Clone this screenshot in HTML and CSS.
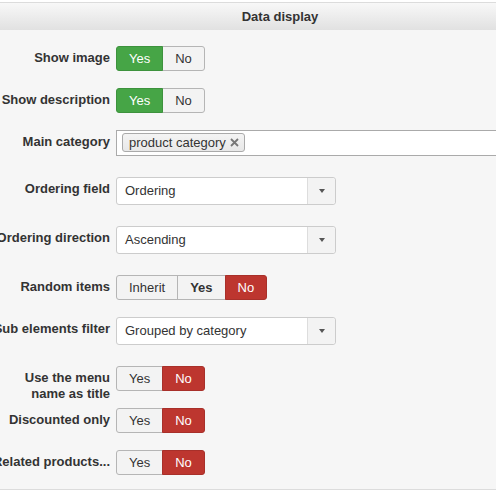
FILE: index.html
```html
<!DOCTYPE html>
<html lang="en">

<head>
    <meta charset="UTF-8">
    <meta name="viewport" content="width=device-width, initial-scale=1.0">
    <title>Module Options</title>
    <link rel="stylesheet" href="styles.css">
</head>

<body>

    <div class="panel">
        <div class="panel-head">Data display</div>

        <div class="panel-body">
            <div class="field">
                <div class="field-label">Show image</div>
                <div class="btn-group">
                    <span class="btn btn-yes">Yes</span>
                    <span class="btn">No</span>
                </div>
            </div>

            <div class="field">
                <div class="field-label">Show description</div>
                <div class="btn-group">
                    <span class="btn btn-yes">Yes</span>
                    <span class="btn">No</span>
                </div>
            </div>

            <div class="field field-tall">
                <div class="field-label">Main category</div>
                <div class="tags">
                    <span class="tag">product category
                        <svg class="tag-close" width="9" height="9" viewBox="0 0 9 9">
                            <path d="M1 1 L8 8 M8 1 L1 8" stroke="#777" stroke-width="1.8" fill="none" />
                        </svg>
                    </span>
                </div>
            </div>

            <div class="field field-tall">
                <div class="field-label">Ordering field</div>
                <div class="select">
                    <span class="select-value">Ordering</span>
                    <span class="select-arrow"><b></b></span>
                </div>
            </div>

            <div class="field field-tall">
                <div class="field-label">Ordering direction</div>
                <div class="select">
                    <span class="select-value">Ascending</span>
                    <span class="select-arrow"><b></b></span>
                </div>
            </div>

            <div class="field">
                <div class="field-label">Random items</div>
                <div class="btn-group">
                    <span class="btn">Inherit</span>
                    <span class="btn btn-bold">Yes</span>
                    <span class="btn btn-no">No</span>
                </div>
            </div>

            <div class="field field-tall">
                <div class="field-label">Sub elements filter</div>
                <div class="select">
                    <span class="select-value">Grouped by category</span>
                    <span class="select-arrow"><b></b></span>
                </div>
            </div>

            <div class="field">
                <div class="field-label">Use the menu name as title</div>
                <div class="btn-group">
                    <span class="btn">Yes</span>
                    <span class="btn btn-no">No</span>
                </div>
            </div>

            <div class="field">
                <div class="field-label">Discounted only</div>
                <div class="btn-group">
                    <span class="btn">Yes</span>
                    <span class="btn btn-no">No</span>
                </div>
            </div>

            <div class="field">
                <div class="field-label">Related products...</div>
                <div class="btn-group">
                    <span class="btn">Yes</span>
                    <span class="btn btn-no">No</span>
                </div>
            </div>
        </div>
    </div>

</body>

</html>
```

FILE: styles.css
```css
html {
    overflow: hidden;
}

body {
    font-family: 'Liberation Sans', Arial, Helvetica, sans-serif;
    font-size: 13px;
    color: #333;
    margin: 0;
    padding: 0;
    background-color: #fff;
}

.panel {
    width: 576px;
    margin: 2px 0 0 -8px;
    border-top: 1px solid #dcdcdc;
    border-bottom: 1px solid #dcdcdc;
    background-color: #f6f6f6;
}

.panel-head {
    height: 27px;
    line-height: 27px;
    text-align: center;
    font-weight: bold;
    background: linear-gradient(#f8f8f8, #e1e1e1);
}

.panel-body {
    padding: 16px 0 14px;
}

.field {
    display: flex;
    align-items: flex-start;
    gap: 6px;
    margin-bottom: 17px;
}

.field-tall {
    margin-bottom: 21px;
}

.field:last-child {
    margin-bottom: 0;
}

/* fixed height so a two-line label doesn't push the row down */
.field-label {
    flex: none;
    width: 118px;
    height: 21px;
    padding-top: 4px;
    line-height: 16px;
    text-align: right;
    font-weight: bold;
}

.btn-group {
    display: flex;
}

.btn {
    display: block;
    height: 25px;
    box-sizing: border-box;
    padding: 3px 12px;
    line-height: 17px;
    border: 1px solid #b5b5b5;
    background-color: #f3f3f3;
    color: #333;
}

.btn + .btn {
    margin-left: -1px;
}

.btn:first-child {
    border-radius: 3px 0 0 3px;
}

.btn:last-child {
    border-radius: 0 3px 3px 0;
}

.btn-bold {
    font-weight: bold;
}

.btn-yes {
    background-color: #46a546;
    border-color: #3d923d;
    color: #fff;
    position: relative;
}

.btn-no {
    background-color: #bd362f;
    border-color: #a8302a;
    color: #fff;
    position: relative;
}

.tags {
    width: 420px;
    height: 26px;
    box-sizing: border-box;
    border: 1px solid #aaa;
    background-color: #fff;
    padding: 2px 5px;
}

.tag {
    display: inline-flex;
    align-items: center;
    gap: 4px;
    height: 19px;
    box-sizing: border-box;
    padding: 2px 5px 2px 6px;
    line-height: 13px;
    border: 1px solid #aaa;
    border-radius: 3px;
    background: linear-gradient(#f4f4f4, #e8e8e8);
    color: #333;
}

.tag-close {
    display: block;
}

.select {
    display: flex;
    width: 220px;
    height: 28px;
    box-sizing: border-box;
    border: 1px solid #ccc;
    border-radius: 3px;
    background-color: #fff;
}

.select-value {
    flex: 1;
    padding-left: 8px;
    line-height: 26px;
}

.select-arrow {
    display: flex;
    align-items: center;
    justify-content: center;
    width: 28px;
    box-sizing: border-box;
    border-left: 1px solid #ddd;
    background-color: #f3f3f3;
    border-radius: 0 3px 3px 0;
}

.select-arrow b {
    width: 0;
    height: 0;
    border-left: 3.5px solid transparent;
    border-right: 3.5px solid transparent;
    border-top: 4px solid #555;
}
```
